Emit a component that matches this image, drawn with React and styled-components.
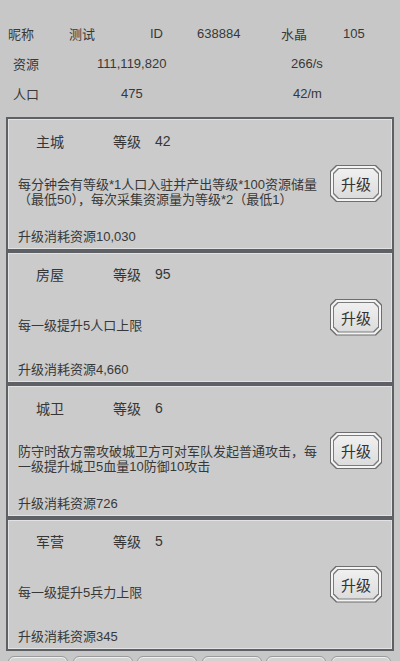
import React from "react";
import styled, { createGlobalStyle } from "styled-components";

const Global = createGlobalStyle`
  html, body { margin: 0; padding: 0; }
  body {
    background: #c7c7c7;
    font-family: "Liberation Sans", "Noto Sans CJK SC", sans-serif;
    color: #363636;
    overflow: hidden;
  }
`;

const Page = styled.div`
  width: 400px;
  height: 661px;
  overflow: hidden;
  display: flex;
  flex-direction: column;
  background: #c7c7c7;
`;

const Header = styled.div`
  padding-top: 18px;
  display: flex;
  flex-direction: column;
`;

const InfoRow = styled.div`
  display: grid;
  grid-template-columns: ${(p) => p.$cols};
  padding-left: ${(p) => p.$pad}px;
  height: 30px;
  align-items: center;
  font-size: 13px;
  color: #383838;
  white-space: nowrap;
`;

const CardList = styled.div`
  margin: 9px 6px 0;
  display: flex;
  flex-direction: column;
`;

const Card = styled.div`
  box-sizing: border-box;
  height: 133.5px;
  border: 2px solid #5d6065;
  box-shadow: inset 0 0 0 1px #e2e2e2;
  background: #cbcbcb;
  display: flex;
  flex-direction: column;
`;

const CardHead = styled.div`
  height: 43px;
  display: flex;
  align-items: center;
  padding-left: 28px;
  font-size: 14px;
  color: #363636;
`;

const Name = styled.span`
  width: 77px;
`;

const LevelLabel = styled.span`
  width: 42px;
`;

const CardBody = styled.div`
  height: 60px;
  display: flex;
  align-items: center;
  padding: 0 10px 0 10px;
`;

const Desc = styled.div`
  flex: 1;
  font-size: 13px;
  line-height: 15px;
  color: #383838;
  padding-right: 12px;
`;

const Cost = styled.div`
  flex: 1;
  display: flex;
  align-items: center;
  padding-left: 10px;
  font-size: 13px;
  color: #383838;
`;

const oct = `polygon(6px 0, calc(100% - 6px) 0, 100% 6px, 100% calc(100% - 6px), calc(100% - 6px) 100%, 6px 100%, 0 calc(100% - 6px), 0 6px)`;
const octS = `polygon(5px 0, calc(100% - 5px) 0, 100% 5px, 100% calc(100% - 5px), calc(100% - 5px) 100%, 5px 100%, 0 calc(100% - 5px), 0 5px)`;

const BtnOuter = styled.div`
  align-self: flex-start;
  margin-top: 3px;
  width: 52px;
  height: 37px;
  box-sizing: border-box;
  padding: 1px;
  background: #6e6e6e;
  clip-path: ${oct};
  display: flex;
`;

const BtnRing = styled.div`
  flex: 1;
  padding: 2px;
  background: #f4f4f4;
  clip-path: ${oct};
  display: flex;
`;

const BtnLine = styled.div`
  flex: 1;
  padding: 1px;
  background: #7c7c7c;
  clip-path: ${octS};
  display: flex;
`;

const BtnFace = styled.div`
  flex: 1;
  background: linear-gradient(#f0f0f0, #dcdcdc);
  clip-path: ${octS};
  display: flex;
  align-items: center;
  justify-content: center;
  font-size: 15px;
  color: #333;
`;

const Tabs = styled.div`
  margin-top: 5px;
  padding-left: 8px;
  display: flex;
  gap: 4.6px;
`;

const Tab = styled.div`
  width: 60px;
  height: 14px;
  box-sizing: border-box;
  border: 1px solid #9a9a9a;
  box-shadow: inset 0 0 0 1px #efefef;
  border-radius: 6px 6px 0 0;
  background: #d2d2d2;
`;

const buildings = [
  {
    name: "主城",
    level: 42,
    desc: "每分钟会有等级*1人口入驻并产出等级*100资源储量（最低50），每次采集资源量为等级*2（最低1）",
    cost: "10,030",
  },
  { name: "房屋", level: 95, desc: "每一级提升5人口上限", cost: "4,660" },
  {
    name: "城卫",
    level: 6,
    desc: "防守时敌方需攻破城卫方可对军队发起普通攻击，每一级提升城卫5血量10防御10攻击",
    cost: "726",
  },
  { name: "军营", level: 5, desc: "每一级提升5兵力上限", cost: "345" },
];

export default function App() {
  return (
    <Page>
      <Global />
      <Header>
        <InfoRow $pad={8} $cols="61px 81px 47px 84px 62px auto">
          <span>昵称</span>
          <span>测试</span>
          <span>ID</span>
          <span>638884</span>
          <span>水晶</span>
          <span>105</span>
        </InfoRow>
        <InfoRow $pad={13} $cols="84px 194px auto">
          <span>资源</span>
          <span>111,119,820</span>
          <span>266/s</span>
        </InfoRow>
        <InfoRow $pad={13} $cols="108px 172px auto">
          <span>人口</span>
          <span>475</span>
          <span>42/m</span>
        </InfoRow>
      </Header>
      <CardList>
        {buildings.map((b) => (
          <Card key={b.name}>
            <CardHead>
              <Name>{b.name}</Name>
              <LevelLabel>等级</LevelLabel>
              <span>{b.level}</span>
            </CardHead>
            <CardBody>
              <Desc>{b.desc}</Desc>
              <BtnOuter>
                <BtnRing>
                  <BtnLine>
                    <BtnFace>升级</BtnFace>
                  </BtnLine>
                </BtnRing>
              </BtnOuter>
            </CardBody>
            <Cost>升级消耗资源{b.cost}</Cost>
          </Card>
        ))}
      </CardList>
      <Tabs>
        {Array.from({ length: 6 }).map((_, i) => (
          <Tab key={i} />
        ))}
      </Tabs>
    </Page>
  );
}
